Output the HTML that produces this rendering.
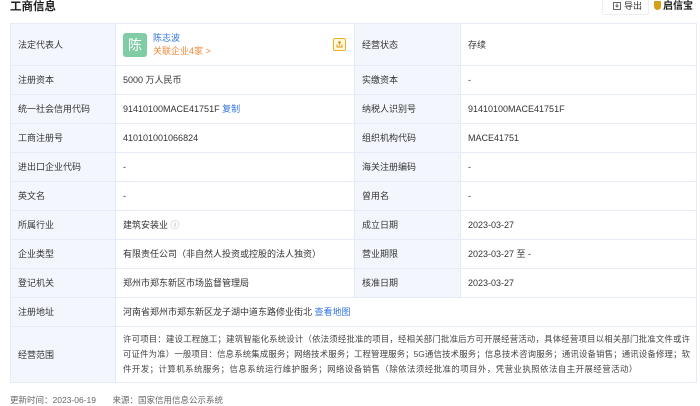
<!DOCTYPE html>
<html><head><meta charset="utf-8"><style>
*{margin:0;padding:0;box-sizing:border-box}
body{width:700px;height:406px;background:#fff;font-family:"Liberation Sans","Noto Sans CJK SC",sans-serif;font-size:9px;color:#333;position:relative;overflow:hidden}
.title{position:absolute;left:10px;top:0px;font-size:11.5px;font-weight:bold;color:#222;line-height:14px}
.exp{position:absolute;left:602px;top:-4px;width:47px;height:19px;border:1px solid #eee;border-radius:2px;font-size:9px;color:#333;line-height:19px;padding-left:10px}
.logo{position:absolute;left:654px;top:0;font-size:10px;font-weight:bold;color:#222;line-height:13px;white-space:nowrap}
.logo i{display:inline-block;width:7px;height:9px;background:#d4a017;border-radius:1px 1px 4px 4px;vertical-align:-1px;margin-right:2px}
table{position:absolute;left:10px;top:23px;width:687px;border-collapse:collapse;table-layout:fixed}
td{border:1px solid #e6ecf7;padding:0 0 0 7px;vertical-align:middle;height:29px;line-height:12px}
td.l{background:#f3f7fd;color:#333}
a{color:#3275e0;text-decoration:none}
.av{display:inline-block;width:24px;height:24px;background:#7fcca5;color:#fff;font-size:14px;line-height:24px;text-align:center;border-radius:3px;vertical-align:middle}
.foot{position:absolute;left:10px;top:394px;color:#666;font-size:8.5px}
.j{text-align:justify;text-align-last:justify;white-space:nowrap;overflow:hidden}
</style></head><body>
<div class="title">工商信息</div>
<div class="exp"><svg width="8" height="8" viewBox="0 0 8 8" style="vertical-align:-1px;margin-right:3px"><rect x="0.5" y="0.5" width="7" height="7" fill="none" stroke="#666"/><path d="M4 1.5V5M2.5 3.5L4 5L5.5 3.5" fill="none" stroke="#666"/></svg>导出</div>
<div class="logo"><i></i>启信宝</div>
<table>
<colgroup><col style="width:105px"><col style="width:239px"><col style="width:106px"><col></colgroup>
<tr style="height:42px"><td class="l" style="height:42px">法定代表人</td><td style="position:relative"><span class="av">陈</span><span style="display:inline-block;vertical-align:middle;margin-left:6px;line-height:13px"><a>陈志波</a><br><span style="color:#f08a3a">关联企业4家 &gt;</span></span><span style="position:absolute;right:8px;top:14px;width:13px;height:13px;border:1px solid #f0b020;background:#fff7e0;border-radius:2px"><svg width="11" height="11" viewBox="0 0 11 11" style="position:absolute;left:0;top:0"><path d="M3 5.5V8H8V5.5M5.5 2.5V6.5M4 4L5.5 2.5L7 4" fill="none" stroke="#e09000" stroke-width="0.9"/></svg></span></td><td class="l">经营状态</td><td>存续</td></tr>
<tr><td class="l">注册资本</td><td>5000 万人民币</td><td class="l">实缴资本</td><td>-</td></tr>
<tr><td class="l">统一社会信用代码</td><td>91410100MACE41751F <a>复制</a></td><td class="l">纳税人识别号</td><td>91410100MACE41751F</td></tr>
<tr><td class="l">工商注册号</td><td>410101001066824</td><td class="l">组织机构代码</td><td>MACE41751</td></tr>
<tr><td class="l">进出口企业代码</td><td>-</td><td class="l">海关注册编码</td><td>-</td></tr>
<tr><td class="l">英文名</td><td>-</td><td class="l">曾用名</td><td>-</td></tr>
<tr><td class="l">所属行业</td><td>建筑安装业 <span style="color:#999">ⓘ</span></td><td class="l">成立日期</td><td>2023-03-27</td></tr>
<tr><td class="l">企业类型</td><td>有限责任公司（非自然人投资或控股的法人独资）</td><td class="l">营业期限</td><td>2023-03-27 至 -</td></tr>
<tr><td class="l">登记机关</td><td>郑州市郑东新区市场监督管理局</td><td class="l">核准日期</td><td>2023-03-27</td></tr>
<tr><td class="l">注册地址</td><td colspan="3">河南省郑州市郑东新区龙子湖中道东路修业街北 <a>查看地图</a></td></tr>
<tr style="height:56px"><td class="l" style="height:56px">经营范围</td><td colspan="3" style="line-height:15px;padding-right:6px;color:#444;font-size:8.4px"><div class="j">许可项目：建设工程施工；建筑智能化系统设计（依法须经批准的项目，经相关部门批准后方可开展经营活动，具体经营项目以相关部门批准文件或许</div><div class="j">可证件为准）一般项目：信息系统集成服务；网络技术服务；工程管理服务；5G通信技术服务；信息技术咨询服务；通讯设备销售；通讯设备修理；软</div><div style="white-space:nowrap;letter-spacing:0.5px">件开发；计算机系统服务；信息系统运行维护服务；网络设备销售（除依法须经批准的项目外，凭营业执照依法自主开展经营活动）</div></td></tr>
</table>
<div class="foot">更新时间：2023-06-19 &nbsp;&nbsp;&nbsp;&nbsp;&nbsp; 来源：国家信用信息公示系统</div>
</body></html>
